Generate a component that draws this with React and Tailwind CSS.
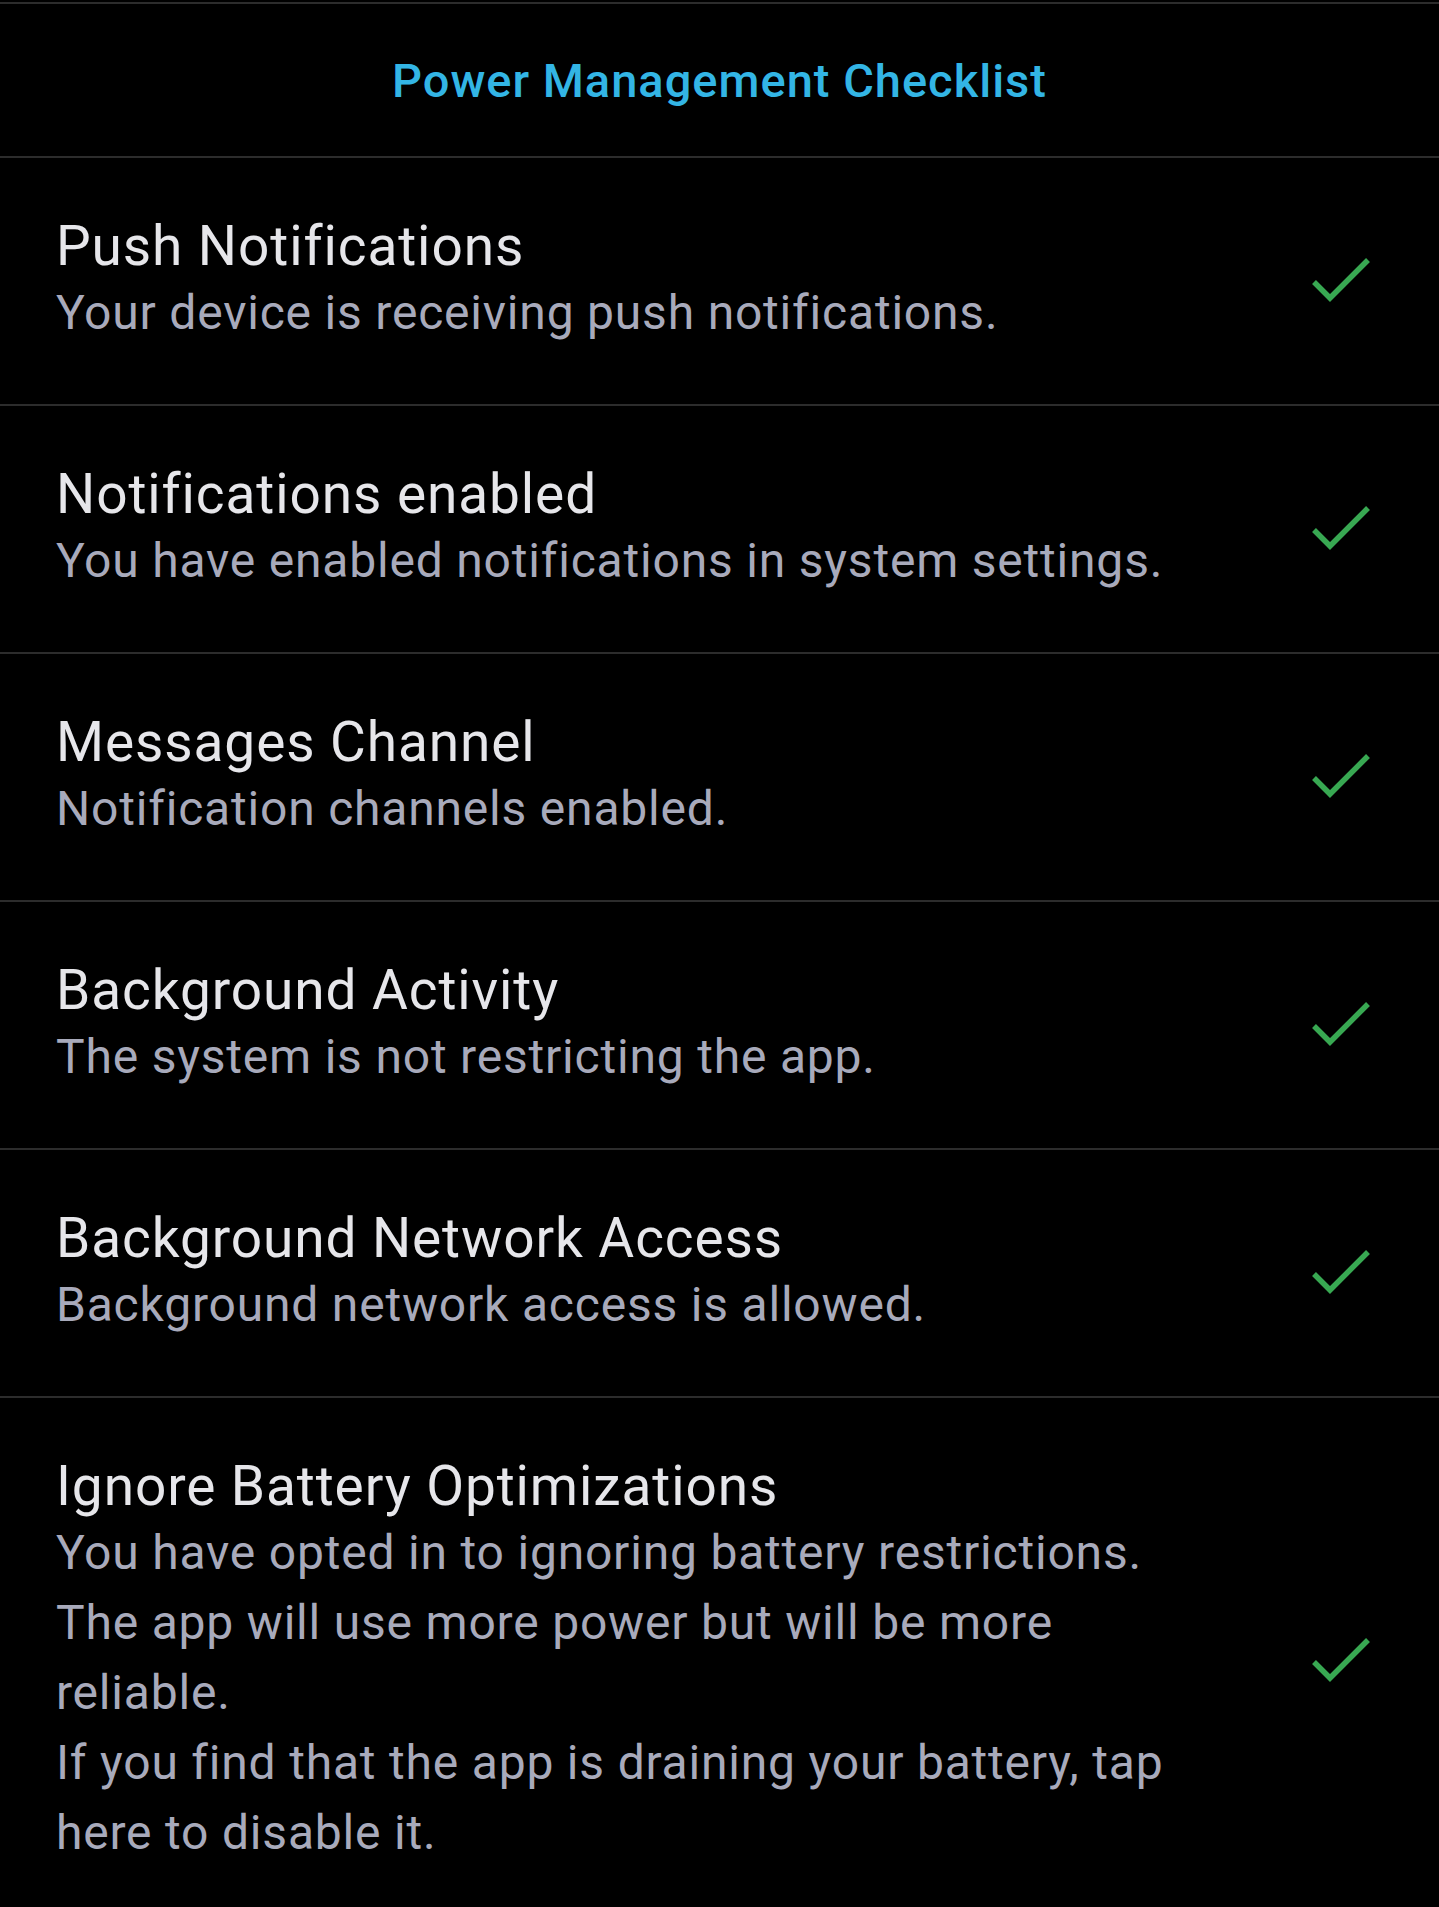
import { Fragment } from 'react'

const ITEMS = [
  { title: 'Push Notifications', lines: ['Your device is receiving push notifications.'] },
  { title: 'Notifications enabled', lines: ['You have enabled notifications in system settings.'] },
  { title: 'Messages Channel', lines: ['Notification channels enabled.'] },
  { title: 'Background Activity', lines: ['The system is not restricting the app.'] },
  { title: 'Background Network Access', lines: ['Background network access is allowed.'] },
  {
    title: 'Ignore Battery Optimizations',
    lines: [
      'You have opted in to ignoring battery restrictions.',
      'The app will use more power but will be more',
      'reliable.',
      'If you find that the app is draining your battery, tap',
      'here to disable it.',
    ],
  },
]

function Check() {
  return (
    <svg width="72" height="56" viewBox="0 0 72 56" className="shrink-0">
      <polyline
        points="10,29 26,45 64,7"
        fill="none"
        stroke="#38a852"
        strokeWidth="5.5"
        strokeLinecap="butt"
        strokeLinejoin="miter"
      />
    </svg>
  )
}

export default function App() {
  return (
    <div className="h-[1907px] overflow-hidden bg-black pt-[2px] font-['Roboto','Noto_Sans',sans-serif]">
      {/* Header */}
      <div className="flex h-[156px] items-center justify-center border-y-2 border-[#2c2c2c]">
        <h1 className="text-[47px] font-medium leading-none tracking-[1px] text-[#33b5e5]">Power Management Checklist</h1>
      </div>

      {/* Checklist rows */}
      {ITEMS.map((item) => (
        <div key={item.title} className="flex items-center border-b-2 border-[#2c2c2c] pl-[56px] pr-[63px]">
          <div className="flex-1 py-[56px]">
            <div className="text-[55px] leading-[64px] tracking-[0.9px] text-[#e6e6ea]">{item.title}</div>
            <div className="text-[48px] leading-[70px] tracking-[0.8px] text-[#a8aabb]">
              {item.lines.map((line, i) => (
                <Fragment key={i}>
                  {i > 0 && <br />}
                  {line}
                </Fragment>
              ))}
            </div>
          </div>
          <Check />
        </div>
      ))}
    </div>
  )
}
